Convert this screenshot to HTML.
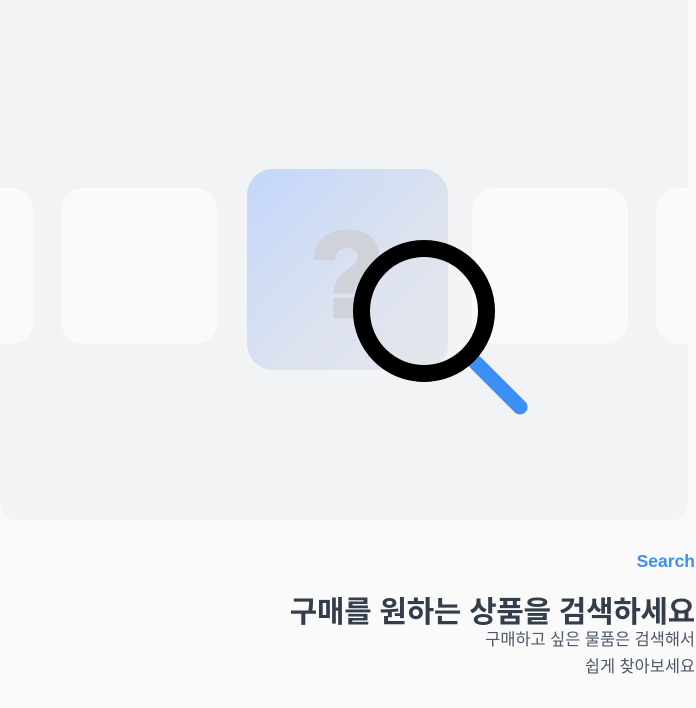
<!DOCTYPE html>
<html><head><meta charset="utf-8"><style>
body{margin:0;width:696px;height:708px;background:#fafafa;position:relative;overflow:hidden;font-family:"Liberation Sans","Noto Sans CJK KR",sans-serif}
.panel{position:absolute;left:0;top:0;width:688px;height:520px;background:#f2f3f5;border-radius:0 0 16px 16px;overflow:visible}
.c{position:absolute;background:#f9fafb;border-radius:22px}
.ctr{position:absolute;left:247px;top:169px;width:201px;height:201px;border-radius:26px;background:linear-gradient(135deg,#c3d6fb 0%,#dde3ef 60%,#e4e6eb 100%)}
.q{position:absolute;left:297px;top:200px;width:100px;text-align:center;font-size:120px;font-weight:bold;color:#cfd2d9;line-height:150px;-webkit-text-stroke:5px #cfd2d9}
.t{position:absolute;right:1px;text-align:right;white-space:nowrap}
</style></head><body>
<div class="panel"></div>
<div class="c" style="left:-40px;top:188px;width:73px;height:156px"></div>
<div class="c" style="left:61px;top:188px;width:156px;height:156px"></div>
<div class="c" style="left:472px;top:188px;width:156px;height:156px"></div>
<div class="c" style="left:656px;top:188px;width:80px;height:156px"></div>
<div class="ctr"></div>
<div class="q">?</div>
<svg style="position:absolute;left:0;top:0" width="696" height="520">
<line x1="476" y1="363" x2="520" y2="407" stroke="#3b8ff5" stroke-width="15" stroke-linecap="round"/>
<circle cx="424" cy="311" r="62.5" fill="none" stroke="#000" stroke-width="17"/>
</svg>
<div class="t" style="top:551px;font-size:17.5px;font-weight:bold;color:#3b8ff5">Search</div>
<div class="t" style="top:587px;font-size:29.8px;font-weight:bold;color:#333d4b;letter-spacing:-0.2px">구매를 원하는 상품을 검색하세요</div>
<div class="t" style="top:627px;font-size:16.4px;color:#4e5968;line-height:27px">구매하고 싶은 물품은 검색해서<br>쉽게 찾아보세요</div>
</body></html>
